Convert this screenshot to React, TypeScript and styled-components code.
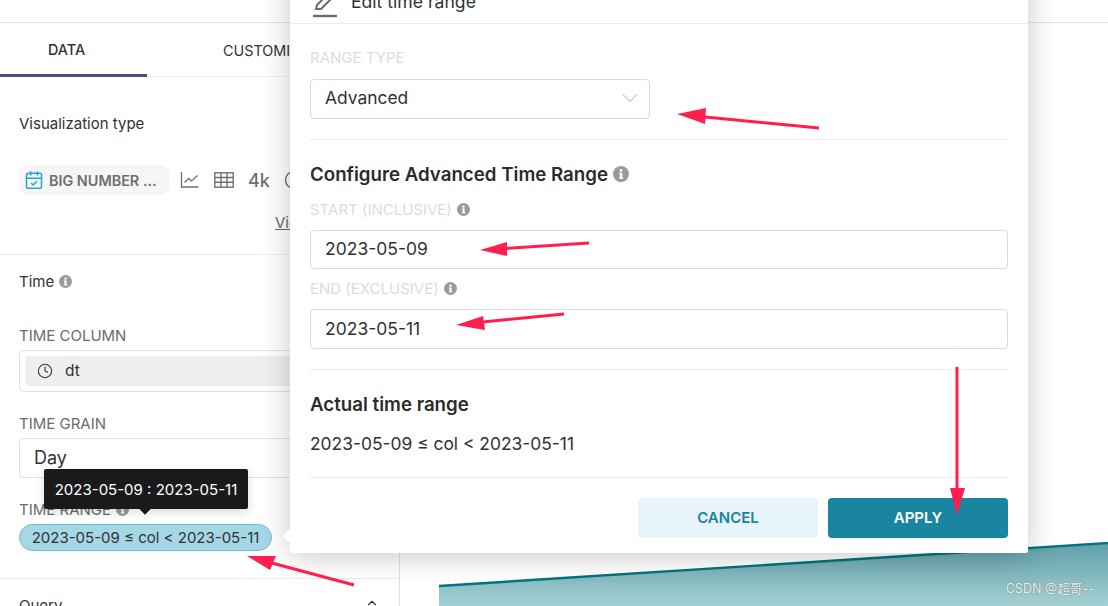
import { CalendarCheck, ChevronDown, ChevronUp, Clock } from 'lucide-react';
import styled, { createGlobalStyle } from 'styled-components';

const GlobalStyle = createGlobalStyle`
  html, body {
    margin: 0;
    padding: 0;
    background: #fff;
  }
  * {
    box-sizing: border-box;
  }
`;

function InfoIcon({ size = 14 }: { size?: number }) {
  return (
    <InfoSvg width={size} height={size} viewBox="0 0 14 14">
      <circle cx="7" cy="7" r="7" fill="#9a9a9a" />
      <rect x="6" y="6" width="2.2" height="5" fill="#fff" />
      <rect x="5.2" y="6" width="2" height="1.1" fill="#fff" />
      <rect x="5.2" y="10" width="3.8" height="1.1" fill="#fff" />
      <circle cx="7" cy="3.9" r="1.3" fill="#fff" />
    </InfoSvg>
  );
}

export default function App() {
  return (
    <Page>
      <GlobalStyle />
      <TopBar />
      <Body>
        <Panel>
          <Tabs>
            <Tab $active>DATA</Tab>
            <Tab>CUSTOMIZE</Tab>
          </Tabs>

          <VizSection>
            <SectionTitle>Visualization type</SectionTitle>
            <VizRow>
              <VizChip>
                <CalendarCheck size={20} color="#20a7c9" strokeWidth={1.8} />
                BIG NUMBER ...
              </VizChip>
              <svg width="20" height="18" viewBox="0 0 20 18" fill="none" stroke="#6f6f6f" strokeWidth="1.3">
                <path d="M1.5 1v15h17" />
                <path d="M4.5 11.5l4-4 3 2.5 6-5.5" />
              </svg>
              <svg width="20" height="16" viewBox="0 0 20 16" fill="none" stroke="#6f6f6f" strokeWidth="1.4">
                <rect x="0.8" y="0.8" width="18.4" height="14.4" />
                <path d="M0.8 5.5h18.4M0.8 10.2h18.4M7 .8v14.4M13 .8v14.4" />
              </svg>
              <VizText>4k</VizText>
              <svg width="20" height="20" viewBox="0 0 20 20" fill="none" stroke="#6f6f6f" strokeWidth="1.4">
                <circle cx="10" cy="10" r="8.5" />
              </svg>
            </VizRow>
            <ViewAll>View all charts</ViewAll>
          </VizSection>

          <TimeSection>
            <SectionTitle>
              Time <InfoIcon size={13} />
            </SectionTitle>
            <FieldLabel $top={36}>TIME COLUMN</FieldLabel>
            <ColumnBox>
              <ColumnChip>
                <Clock size={16} color="#333" strokeWidth={1.6} />
                dt
              </ColumnChip>
            </ColumnBox>
            <FieldLabel $top={22}>TIME GRAIN</FieldLabel>
            <GrainBox>Day</GrainBox>
            <FieldLabel $top={22}>
              TIME RANGE <InfoIcon size={13} />
            </FieldLabel>
            <RangeField>
              <RangeTip>2023-05-09 : 2023-05-11</RangeTip>
              <RangePill>2023-05-09 ≤ col &lt; 2023-05-11</RangePill>
            </RangeField>
          </TimeSection>

          <QuerySection>
            Query
            <ChevronUp size={14} color="#333" />
          </QuerySection>
        </Panel>

        <ChartArea>
          <svg width="669" height="64" viewBox="0 0 669 64" style={{ display: 'block' }}>
            <defs>
              <linearGradient id="area" x1="0" y1="0" x2="0" y2="1">
                <stop offset="0" stopColor="#5f9fa8" />
                <stop offset="1" stopColor="#a6d1d4" />
              </linearGradient>
            </defs>
            <path d="M0 44L669 1V64H0Z" fill="url(#area)" />
            <path d="M0 44L669 1" stroke="#00747f" strokeWidth="2.4" fill="none" />
          </svg>
        </ChartArea>
      </Body>

      <Modal>
        <ModalHeader>
          <PencilSvg width="26" height="26" viewBox="0 0 26 26" fill="none" stroke="#6a6a6a" strokeWidth="2">
            <path d="M4 17l1-4L16 2l4 4L9 17z" />
            <path d="M1 24h24" strokeWidth="2.4" />
          </PencilSvg>
          Edit time range
        </ModalHeader>
        <ModalBody>
          <MutedLabel $top={24}>RANGE TYPE</MutedLabel>
          <RangeSelect>
            Advanced
            <ChevronDown size={28} color="#bdbdbd" strokeWidth={0.9} />
          </RangeSelect>
          <Divider $top={20} />
          <Heading $top={23}>
            Configure Advanced Time Range <InfoIcon size={16} />
          </Heading>
          <MutedLabel $top={15}>
            START (INCLUSIVE) <InfoIcon size={13} />
          </MutedLabel>
          <TextField>2023-05-09</TextField>
          <MutedLabel $top={10}>
            END (EXCLUSIVE) <InfoIcon size={13} />
          </MutedLabel>
          <TextField $tall>2023-05-11</TextField>
          <Divider $top={20} />
          <Heading $top={23}>Actual time range</Heading>
          <ActualValue>2023-05-09 ≤ col &lt; 2023-05-11</ActualValue>
          <Divider $top={23} />
          <Footer>
            <Button>CANCEL</Button>
            <Button $primary>APPLY</Button>
          </Footer>
        </ModalBody>
      </Modal>
      <PopoverArrow />

      <Arrows width="1108" height="606" viewBox="0 0 1108 606">
        <g stroke="#ff1f4f" strokeWidth="3" fill="#ff1f4f">
          <path d="M819 128L695 116" />
          <path d="M589 243L497 249" />
          <path d="M564 314L473 323" />
          <path d="M957 367L957 490" />
          <path d="M354 585L268 562" />
        </g>
        <g fill="#ff1f4f">
          <path d="M677 114L706 108L705 124Z" />
          <path d="M480 250L507 242L507 256Z" />
          <path d="M456 325L483 316L485 330Z" />
          <path d="M950 488H965L957 515Z" />
          <path d="M247 556L276 556L270 570Z" />
        </g>
      </Arrows>

      <Watermark>CSDN @超哥--</Watermark>
    </Page>
  );
}

const Page = styled.div`
  position: relative;
  width: 1108px;
  height: 606px;
  overflow: hidden;
  display: flex;
  flex-direction: column;
  font-family: Inter, 'Noto Sans', 'Noto Sans CJK SC', sans-serif;
  color: #323232;
`;

const TopBar = styled.div`
  height: 23px;
  flex: none;
  border-bottom: 1px solid #e0e0e0;
`;

const Body = styled.div`
  flex: 1;
  min-height: 0;
  display: flex;
`;

const Panel = styled.div`
  width: 400px;
  flex: none;
  border-right: 1px solid #e0e0e0;
  display: flex;
  flex-direction: column;
`;

const Tabs = styled.div`
  height: 54px;
  flex: none;
  display: flex;
  border-bottom: 1px solid #f0f0f0;
`;

const Tab = styled.div<{ $active?: boolean }>`
  height: 54px;
  display: flex;
  align-items: center;
  font-size: 14.4px;
  color: #323232;
  font-weight: ${(p) => (p.$active ? 500 : 400)};
  border-bottom: ${(p) => (p.$active ? '3px solid #484f7d' : 'none')};
  width: ${(p) => (p.$active ? '147px' : 'auto')};
  padding-left: ${(p) => (p.$active ? '48px' : '76px')};
  padding-top: ${(p) => (p.$active ? '1px' : '0')};
`;

const VizSection = styled.div`
  height: 178px;
  flex: none;
  padding: 37px 0 0 19px;
  border-bottom: 1px solid #ececec;
`;

const SectionTitle = styled.div`
  display: flex;
  align-items: center;
  gap: 5px;
  height: 18px;
  font-size: 15px;
  color: #323232;
`;

const VizRow = styled.div`
  margin-top: 33px;
  display: flex;
  align-items: center;
  gap: 14px;
  color: #6f6f6f;
`;

const VizChip = styled.div`
  width: 150px;
  height: 30px;
  margin-right: -3px;
  border-radius: 8px;
  background: #f6f6f6;
  display: flex;
  align-items: center;
  gap: 5px;
  padding-left: 5px;
  font-size: 14.4px;
  font-weight: 600;
  color: #6f6f6f;
  white-space: nowrap;
`;

const VizText = styled.span`
  font-size: 18px;
  font-weight: 500;
`;

const ViewAll = styled.div`
  margin: 18px 0 0 256px;
  font-size: 15px;
  color: #666;
  text-decoration: underline;
  white-space: nowrap;
`;

const TimeSection = styled.div`
  height: 324px;
  flex: none;
  padding: 17px 19px 0;
  border-bottom: 1px solid #ececec;
`;

const FieldLabel = styled.div<{ $top: number }>`
  display: flex;
  align-items: center;
  gap: 5px;
  margin-top: ${(p) => p.$top}px;
  height: 18px;
  font-size: 15px;
  color: #6b6b6b;
`;

const ColumnBox = styled.div`
  margin-top: 6px;
  height: 42px;
  border: 1px solid #e0e0e0;
  border-radius: 4px;
  padding: 5px;
`;

const ColumnChip = styled.div`
  height: 30px;
  border-radius: 3px;
  background: #efefef;
  display: flex;
  align-items: center;
  gap: 12px;
  padding: 0 0 1px 12px;
  font-size: 15.5px;
`;

const GrainBox = styled.div`
  margin-top: 6px;
  height: 40px;
  border: 1px solid #e0e0e0;
  border-radius: 4px;
  padding: 0 0 2px 14px;
  display: flex;
  align-items: center;
  font-size: 18px;
`;

const RangeField = styled.div`
  position: relative;
  margin-top: 6px;
`;

const RangePill = styled.div`
  width: 253px;
  height: 27px;
  border: 1px solid #6fbdd3;
  border-radius: 14px;
  background: #a5d7e6;
  display: flex;
  align-items: center;
  justify-content: center;
  font-size: 15px;
  color: #323232;
  white-space: nowrap;
`;

const RangeTip = styled.div`
  position: absolute;
  left: 25px;
  top: -55px;
  width: 204px;
  height: 40px;
  border-radius: 2px;
  background: #1a1a1a;
  color: #fff;
  font-size: 15px;
  display: flex;
  align-items: center;
  justify-content: center;
  white-space: nowrap;
  box-shadow: 0 3px 10px rgba(0, 0, 0, 0.15);
  &::after {
    content: '';
    position: absolute;
    left: 97px;
    bottom: -4px;
    width: 8px;
    height: 8px;
    background: #1a1a1a;
    transform: rotate(45deg);
  }
`;

const QuerySection = styled.div`
  padding: 17px 20px 0 19px;
  display: flex;
  justify-content: space-between;
  font-size: 15px;
`;

const ChartArea = styled.div`
  flex: 1;
  min-width: 0;
  display: flex;
  flex-direction: column;
  justify-content: flex-end;
  padding-left: 39px;
`;

const Modal = styled.div`
  position: absolute;
  left: 290px;
  top: -33px;
  width: 738px;
  height: 586px;
  background: #fff;
  border-radius: 2px;
  box-shadow: 0 3px 30px rgba(0, 0, 0, 0.22);
`;

const ModalHeader = styled.div`
  height: 57px;
  padding: 17px 0 0 22px;
  border-bottom: 1px solid #ececec;
  display: flex;
  align-items: flex-start;
  gap: 13px;
  font-size: 17.6px;
  line-height: 36px;
  color: #323232;
`;

const PencilSvg = styled.svg`
  flex: none;
  margin-top: 8px;
`;

const ModalBody = styled.div`
  padding: 0 20px;
  display: flex;
  flex-direction: column;
`;

const MutedLabel = styled.div<{ $top: number }>`
  display: flex;
  align-items: center;
  gap: 5px;
  margin-top: ${(p) => p.$top}px;
  height: 18px;
  font-size: 15px;
  color: #dcdcdc;
`;

const RangeSelect = styled.div`
  margin-top: 13px;
  width: 340px;
  height: 40px;
  border: 1px solid #d9d9d9;
  border-radius: 4px;
  padding: 0 5px 3px 14px;
  display: flex;
  align-items: center;
  justify-content: space-between;
  font-size: 17.4px;
`;

const Divider = styled.div<{ $top: number }>`
  margin-top: ${(p) => p.$top}px;
  height: 1px;
  flex: none;
  background: #ececec;
`;

const Heading = styled.div<{ $top: number }>`
  margin-top: ${(p) => p.$top}px;
  height: 22px;
  display: flex;
  align-items: center;
  gap: 5px;
  font-size: 18.7px;
  font-weight: 600;
  color: #2b2b2b;
`;

const TextField = styled.div<{ $tall?: boolean }>`
  margin-top: 12px;
  height: ${(p) => (p.$tall ? 40 : 39)}px;
  border: 1px solid #d9d9e3;
  border-radius: 4px;
  padding: 0 0 2px 14px;
  display: flex;
  align-items: center;
  font-size: 17.5px;
`;

const ActualValue = styled.div`
  margin-top: 17px;
  height: 22px;
  display: flex;
  align-items: center;
  font-size: 17.4px;
`;

const Footer = styled.div`
  margin-top: 20px;
  display: flex;
  justify-content: flex-end;
  gap: 10px;
`;

const Button = styled.div<{ $primary?: boolean }>`
  width: 180px;
  height: 40px;
  padding-bottom: 1px;
  border-radius: 4px;
  display: flex;
  align-items: center;
  justify-content: center;
  font-size: 15px;
  font-weight: 600;
  background: ${(p) => (p.$primary ? '#1a85a0' : '#e7f4f9')};
  color: ${(p) => (p.$primary ? '#fff' : '#1a85a0')};
`;

const PopoverArrow = styled.div`
  position: absolute;
  left: 285px;
  top: 531px;
  width: 10px;
  height: 10px;
  background: #fff;
  transform: rotate(45deg);
`;

const InfoSvg = styled.svg`
  flex: none;
  display: block;
`;

const Arrows = styled.svg`
  position: absolute;
  left: 0;
  top: 0;
  pointer-events: none;
`;

const Watermark = styled.div`
  position: absolute;
  right: 14px;
  bottom: 9px;
  font-size: 12.6px;
  color: #f2f2f2;
  text-shadow: 0 0 1px #555;
  white-space: nowrap;
`;
